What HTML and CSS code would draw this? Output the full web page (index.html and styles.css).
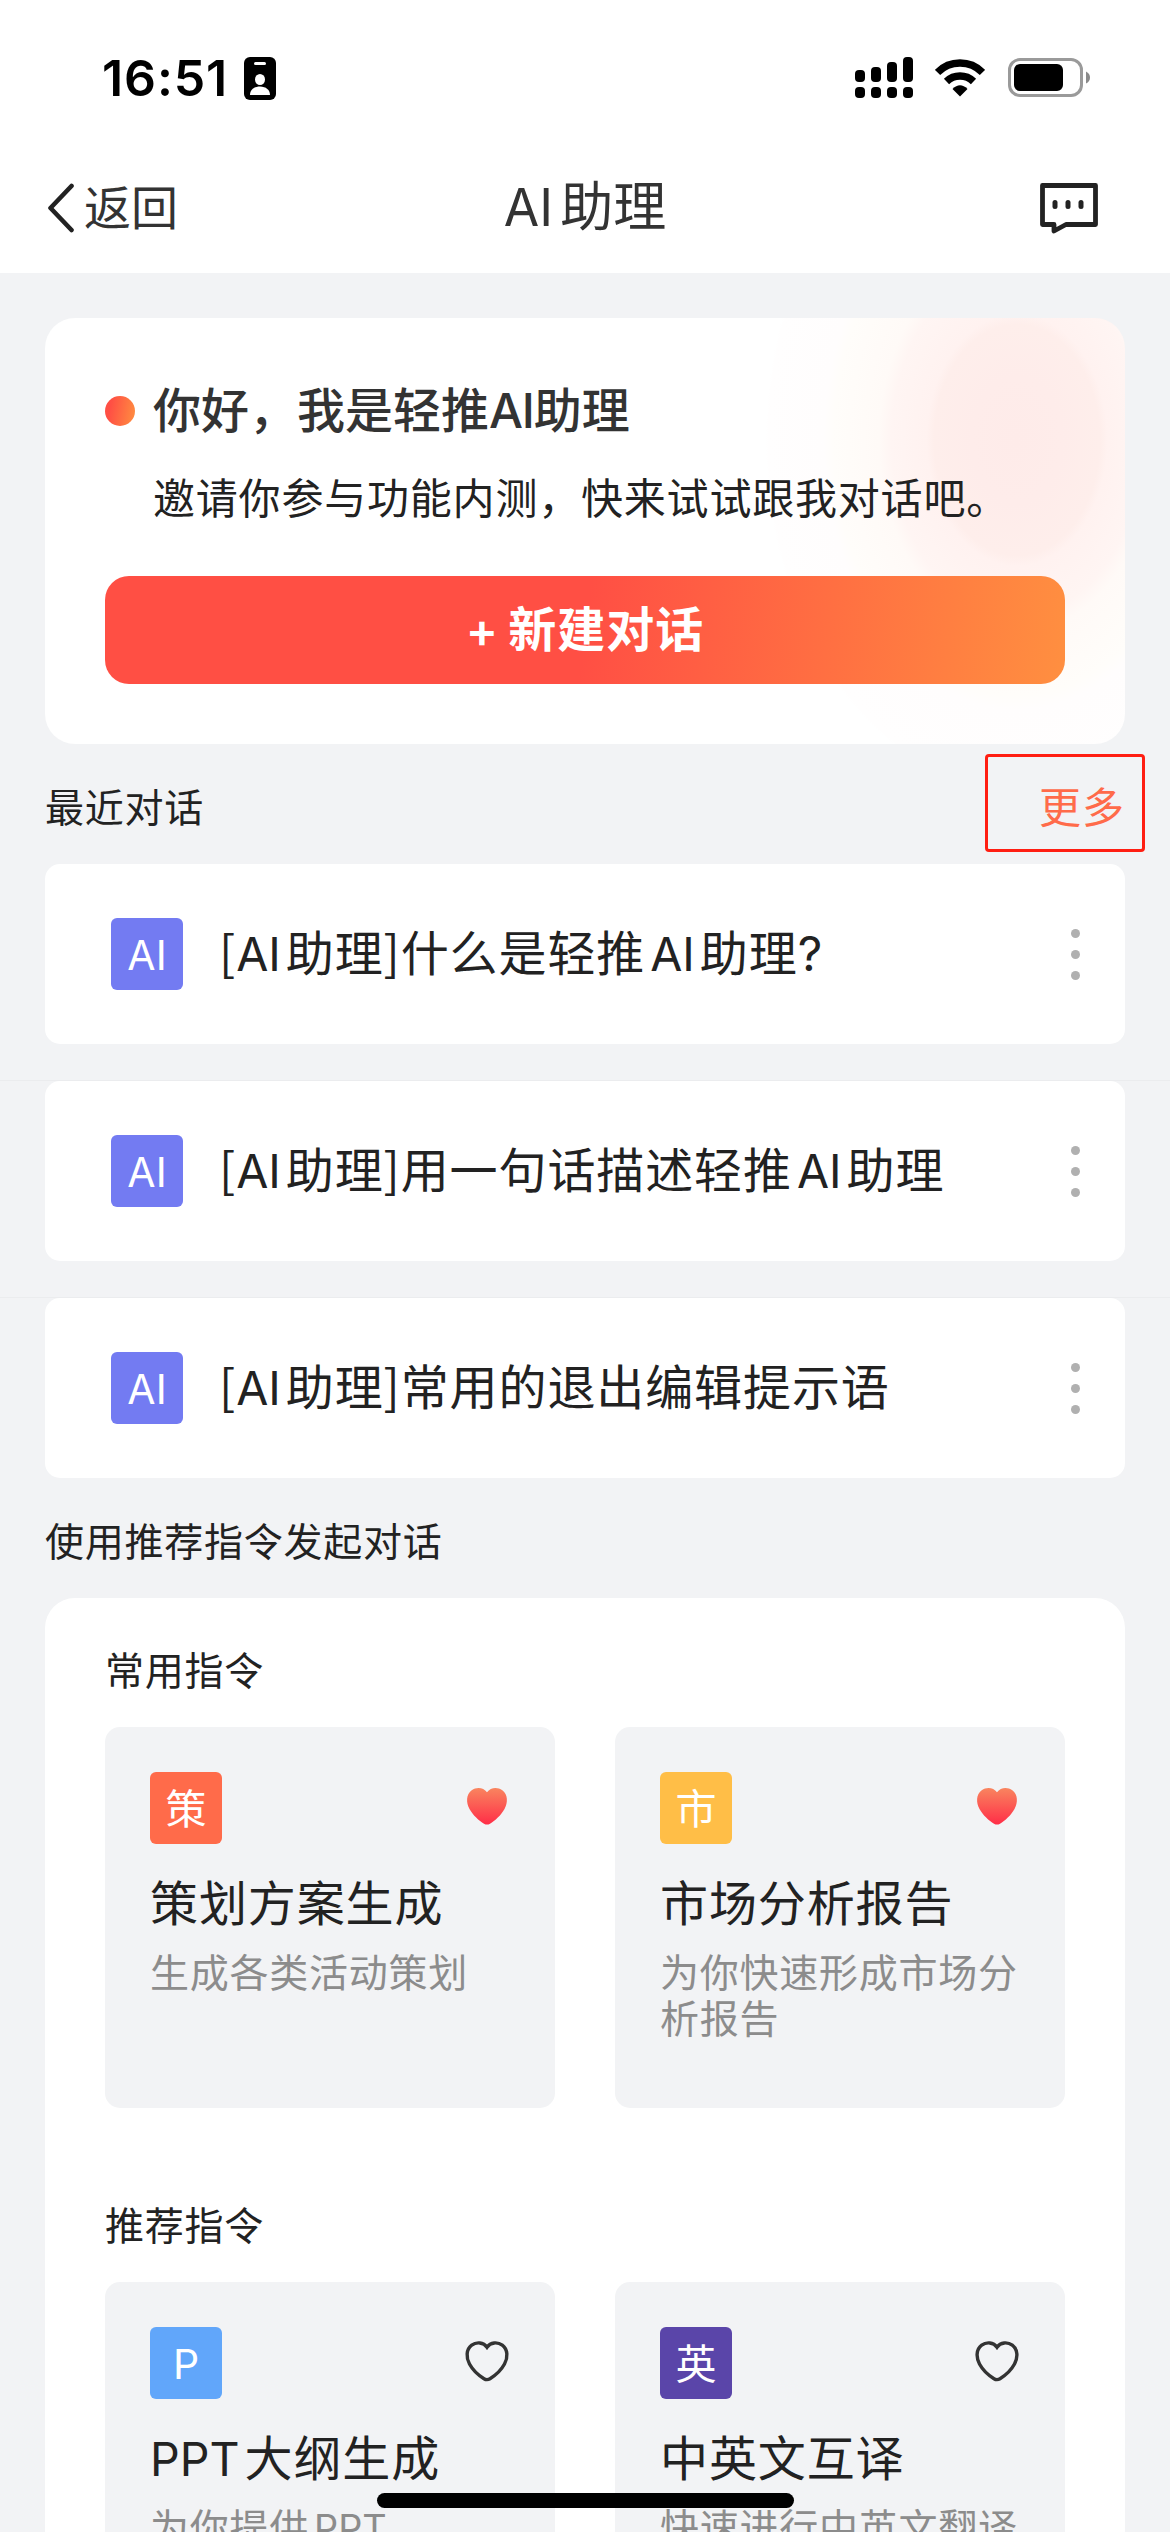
FILE: index.html
```html
<!DOCTYPE html>
<html lang="zh-CN">
<head>
<meta charset="utf-8">
<title>AI助理</title>
<link rel="stylesheet" href="styles.css">
</head>
<body>
<svg class="defs" width="0" height="0" aria-hidden="true">
  <defs>
    <linearGradient id="heartFill" x1="0" y1="0" x2="0" y2="1">
      <stop offset="0" stop-color="#f9855f"/>
      <stop offset="1" stop-color="#ff2d47"/>
    </linearGradient>
    <path id="heart" d="M24 8.2C20.5 3.2 13.5 2.6 8.700 6.200C3 10.500 3 18.500 6.500 25C10 31.500 16 36.600 21 39.700C23 40.900 25 40.900 27 39.700C32 36.600 38 31.500 41.500 25C45 18.500 45 10.500 39.300 6.200C34.500 2.600 27.500 3.200 24 8.200Z"/>
  </defs>
</svg>
<div class="screen">
  <header class="top">
    <div class="status">
      <div class="status-left">
        <span class="time">16:51</span>
        <svg class="badge" width="32" height="43" viewBox="0 0 32 43">
          <rect width="32" height="43" rx="6"/>
          <rect x="10" y="5" width="12" height="3" rx="1.500" fill="#fff"/>
          <ellipse cx="16" cy="22.500" rx="5" ry="5.500" fill="#fff"/>
          <path d="M6 38C6 33 10 29.500 16 29.500S26 33 26 38Z" fill="#fff"/>
        </svg>
      </div>
      <div class="status-right">
        <svg width="58" height="42" viewBox="0 0 58 42">
          <rect x="0" y="13" width="10" height="12" rx="4"/>
          <rect x="16" y="10" width="10" height="15" rx="4"/>
          <rect x="32" y="5" width="10" height="20" rx="4"/>
          <rect x="48" y="0" width="10" height="25" rx="4"/>
          <rect x="0" y="30" width="10" height="11" rx="4"/>
          <rect x="16" y="30" width="10" height="11" rx="4"/>
          <rect x="32" y="30" width="10" height="11" rx="4"/>
          <rect x="48" y="30" width="10" height="11" rx="4"/>
        </svg>
        <svg class="wifi" width="50" height="38" viewBox="0 0 50 38">
          <path d="M2.500 13.500A31.500 31.500 0 0 1 47.500 13.500" fill="none" stroke="#000" stroke-width="7.500"/>
          <path d="M11.500 22.500A19.500 19.500 0 0 1 38.500 22.500" fill="none" stroke="#000" stroke-width="7.500"/>
          <path d="M25 37.500L17.500 30Q25 22.500 32.500 30Z"/>
        </svg>
        <svg class="battery" width="83" height="39" viewBox="0 0 83 39">
          <rect x="1.500" y="1.500" width="72" height="36" rx="10.500" fill="none" stroke="#9a9a9a" stroke-width="3"/>
          <rect x="6" y="6" width="49" height="27" rx="6"/>
          <path d="M78 13.500Q82 15.500 82 19.500T78 25.500Z" fill="#8a8a8a"/>
        </svg>
      </div>
    </div>
    <nav class="nav">
      <div class="back">
        <svg width="28" height="50" viewBox="0 0 28 50"><path d="M24.500 3L3.500 25L24.500 47" fill="none" stroke="#222" stroke-width="4.600" stroke-linecap="round" stroke-linejoin="round"/></svg>
        <span>返回</span>
      </div>
      <h1 class="nav-title"><span class="en">AI</span>助理</h1>
      <svg class="chat" width="60" height="52" viewBox="0 0 60 52">
        <path d="M3.500 3.500H56.500V42.500H27L15 49V42.500H3.500Z" fill="none" stroke="#222" stroke-width="4.800" stroke-linejoin="round"/>
        <rect x="13.500" y="18" width="5" height="9" rx="2.500" fill="#222"/>
        <rect x="26.500" y="18" width="5" height="9" rx="2.500" fill="#222"/>
        <rect x="39.500" y="18" width="5" height="9" rx="2.500" fill="#222"/>
      </svg>
    </nav>
  </header>

  <main class="content">
    <section class="hero">
      <div class="hero-title"><i class="dot"></i><h2>你好，我是轻推<span class="tight">AI</span>助理</h2></div>
      <p class="hero-desc">邀请你参与功能内测，快来试试跟我对话吧。</p>
      <button class="new-chat"><span class="plus">+</span>新建对话</button>
    </section>

    <div class="section-head"><span>最近对话</span><a class="more">更多</a></div>

    <ul class="chats">
      <li class="chat-row"><div class="chat-card"><span class="tag violet">AI</span><span class="chat-title"><span class="br">[</span><span class="en">AI</span>助理<span class="br">]</span>什么是轻推<span class="en mid">AI</span>助理?</span><span class="kebab"><i></i><i></i><i></i></span></div></li>
      <li class="chat-row"><div class="chat-card"><span class="tag violet">AI</span><span class="chat-title"><span class="br">[</span><span class="en">AI</span>助理<span class="br">]</span>用一句话描述轻推<span class="en mid">AI</span>助理</span><span class="kebab"><i></i><i></i><i></i></span></div></li>
      <li class="chat-row"><div class="chat-card"><span class="tag violet">AI</span><span class="chat-title"><span class="br">[</span><span class="en">AI</span>助理<span class="br">]</span>常用的退出编辑提示语</span><span class="kebab"><i></i><i></i><i></i></span></div></li>
    </ul>

    <div class="section-head second"><span>使用推荐指令发起对话</span></div>

    <section class="panel">
      <h3>常用指令</h3>
      <div class="grid">
        <article class="cmd">
          <div class="cmd-top"><span class="tag orange">策</span><svg class="heart" width="48" height="44" viewBox="0 0 48 44"><use href="#heart" fill="url(#heartFill)"/></svg></div>
          <h4>策划方案生成</h4>
          <p>生成各类活动策划</p>
        </article>
        <article class="cmd">
          <div class="cmd-top"><span class="tag yellow">市</span><svg class="heart" width="48" height="44" viewBox="0 0 48 44"><use href="#heart" fill="url(#heartFill)"/></svg></div>
          <h4>市场分析报告</h4>
          <p>为你快速形成市场分析报告</p>
        </article>
      </div>
      <h3>推荐指令</h3>
      <div class="grid">
        <article class="cmd">
          <div class="cmd-top"><span class="tag blue">P</span><svg class="heart" width="48" height="44" viewBox="0 0 48 44"><use href="#heart" fill="none" stroke="#333" stroke-width="3.400"/></svg></div>
          <h4><span class="en">PPT</span>大纲生成</h4>
          <p>为你提供<span class="en mid">PPT</span></p>
        </article>
        <article class="cmd">
          <div class="cmd-top"><span class="tag purple">英</span><svg class="heart" width="48" height="44" viewBox="0 0 48 44"><use href="#heart" fill="none" stroke="#333" stroke-width="3.400"/></svg></div>
          <h4>中英文互译</h4>
          <p>快速进行中英文翻译</p>
        </article>
      </div>
    </section>
  </main>
  <div class="marker"></div>
  <div class="home-bar"></div>
</div>
</body>
</html>
```
FILE: styles.css
```css
* { box-sizing: border-box; margin: 0; padding: 0; }
body {
  width: 1170px;
  height: 2532px;
  overflow: hidden;
  background: #f2f3f5;
  color: #222;
  font-family: Inter, "Noto Sans CJK SC", sans-serif;
  text-autospace: no-autospace;
}
.defs { position: absolute; }
.screen { position: relative; height: 2532px; overflow: hidden; }
svg { display: block; flex: none; }
h1, h2, h3, h4 { font-weight: 400; }
ul { list-style: none; }

.top { height: 273px; background: #fff; }
.status {
  height: 142px;
  padding: 57px 79px 0 102px;
  display: flex;
  justify-content: space-between;
  align-items: flex-start;
}
.status-left, .status-right { display: flex; align-items: flex-start; }
.time {
  width: 142px;
  font: 600 50px/43px Inter, sans-serif;
  letter-spacing: .9px;
  color: #000;
}
.wifi { margin: 2px 0 0 22px; }
.battery { margin: 1px 0 0 23px; }
.nav {
  height: 131px;
  padding: 0 71px 0 47px;
  display: grid;
  grid-template-columns: 1fr auto 1fr;
  align-items: center;
}
.back { display: flex; align-items: center; gap: 9px; font-size: 47px; line-height: 60px; color: #333; }
.nav-title { margin-left: 24px; padding-bottom: 2px; font-size: 53px; line-height: 64px; color: #333; }
.nav-title .en { margin-right: 7px; }
.chat { justify-self: end; }

.content { padding: 45px 45px 0; }
.hero {
  height: 426px;
  padding: 63px 60px 0;
  border-radius: 30px;
  background: radial-gradient(ellipse 251px 350px at 972px 122px, #feebe9 0%, #feecea 18%, #feeeeb 33%, #fff2f0 36%, #fff5f3 50%, #fffaf7 55%, #fffdfa 73%, #fffdfd 77%, #fffefe 99%, #fff 100%) #fff;
}
.hero-title { display: flex; align-items: center; height: 60px; }
.dot { width: 30px; height: 30px; margin-right: 18px; border-radius: 50%; background: linear-gradient(100deg, #ff4f44 20%, #ff8f40); }
.hero-title h2 { font-size: 48px; line-height: 60px; font-weight: 500; color: #333; }
.tight { letter-spacing: -1.2px; }
.hero-desc { margin: 27px 0 0 48px; font-size: 42px; line-height: 62px; height: 60px; letter-spacing: .8px; white-space: nowrap; }
.new-chat {
  display: flex;
  align-items: center;
  justify-content: center;
  width: 100%;
  height: 108px;
  margin-top: 48px;
  border: 0;
  border-radius: 24px;
  background: linear-gradient(97deg, #ff4f44 50%, #ff8f40);
  color: #fff;
  font: 600 48px/60px Inter, "Noto Sans CJK SC", sans-serif;
  letter-spacing: 1px;
}
.plus { margin-right: 9px; }

.section-head {
  height: 120px;
  padding-top: 8px;
  display: flex;
  align-items: center;
  justify-content: space-between;
  font-size: 39px;
  line-height: 60px;
  letter-spacing: .75px;
}
.more { font-size: 42px; letter-spacing: 1px; color: #ff6b4a; }

.chat-row + .chat-row { margin: 36px -45px 0; padding: 0 45px; border-top: 1px solid #ebecee; }
.chat-card {
  height: 180px;
  padding: 0 45px 0 66px;
  display: flex;
  align-items: center;
  border-radius: 15px;
  background: #fff;
}
.tag {
  flex: none;
  width: 72px;
  height: 72px;
  border-radius: 6px;
  color: #fff;
  font-size: 41px;
  line-height: 74px;
  text-align: center;
}
.violet { background: #737bf2; }
.orange { background: #ff6b4a; }
.yellow { background: #ffbe47; }
.blue { background: #61a6fa; }
.purple { background: #5a45a9; }
.chat-title { flex: 1; margin-left: 36px; font-size: 48px; line-height: 70px; letter-spacing: .9px; white-space: nowrap; }
.br { font-family: "Noto Sans CJK SC", sans-serif; line-height: 1; }
.en { margin-right: 5px; font-size: .97em; letter-spacing: 0; }
.en.mid { margin-left: 5px; }
.kebab { display: flex; flex-direction: column; gap: 12px; }
.kebab i { width: 9px; height: 9px; border-radius: 50%; background: #b0b0b0; }

.panel { height: 1000px; padding: 0 60px; border-radius: 30px; background: #fff; }
.panel h3 { height: 129px; padding-top: 44px; font-size: 39px; line-height: 58px; letter-spacing: .75px; }
.grid { display: grid; grid-template-columns: 1fr 1fr; gap: 60px; }
.grid + h3 { margin-top: 45px; }
.cmd { height: 381px; padding: 45px; border-radius: 15px; background: #f2f3f5; }
.cmd-top { display: flex; justify-content: space-between; }
.heart { margin-top: 12px; margin-right: -1px; }
.cmd h4 { margin-top: 25px; font-size: 48px; line-height: 70px; letter-spacing: .9px; white-space: nowrap; }
.cmd p { margin-top: 11px; font-size: 39px; line-height: 46px; letter-spacing: .75px; color: #8c8c8c; margin-right: -10px; }

.marker { position: absolute; left: 985px; top: 754px; width: 160px; height: 98px; border: 3px solid #ff1e12; border-radius: 4px; }
.home-bar { position: absolute; left: 377px; top: 2493px; width: 417px; height: 15px; border-radius: 8px; background: #000; }
```
